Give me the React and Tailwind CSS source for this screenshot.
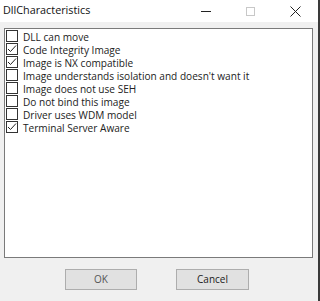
import React from "react";

const items = [
  ["DLL can move", false],
  ["Code Integrity Image", true],
  ["Image is NX compatible", true],
  ["Image understands isolation and doesn't want it", false],
  ["Image does not use SEH", false],
  ["Do not bind this image", false],
  ["Driver uses WDM model", false],
  ["Terminal Server Aware", true],
];

function Box({ checked }) {
  return (
    <div className="w-[12px] h-[12px] border border-[#333333] bg-white flex-none relative">
      {checked && (
        <svg width="10" height="10" viewBox="0 0 10 10" className="absolute left-0 top-0">
          <polyline points="1,5 3.5,7.5 9,1.5" fill="none" stroke="#222" strokeWidth="1" />
        </svg>
      )}
    </div>
  );
}

export default function App() {
  return (
    <div
      className="w-[320px] h-[301px] flex overflow-hidden bg-[#f0f0f0]"
      style={{ fontFamily: '"Open Sans", "Noto Sans", sans-serif' }}
    >
      <div className="w-[318px] h-full flex flex-col bg-[#f0f0f0]">
        <div className="h-[22px] bg-white flex items-center flex-none">
          <div className="pl-[3px] pb-[1px] text-[10.8px] text-[#111] flex-1 leading-none">DllCharacteristics</div>
          <div className="w-[45px] h-full flex items-center justify-center">
            <div className="w-[10px] h-[1px] bg-[#222]" />
          </div>
          <div className="w-[45px] h-full flex items-center justify-center">
            <div className="w-[9px] h-[9px] border border-[#c8c8c8]" />
          </div>
          <div className="w-[45px] h-full flex items-center justify-center">
            <svg width="11" height="11" viewBox="0 0 11 11">
              <path d="M0.5 0.5 L10.5 10.5 M10.5 0.5 L0.5 10.5" stroke="#222" strokeWidth="1" />
            </svg>
          </div>
        </div>
        <div className="pl-[4px] pt-[6px]">
          <div className="w-[309px] h-[230px] border border-[#7a7a7a] bg-white pt-[1px] pl-[1px]">
            {items.map(([label, checked]) => (
              <div key={label} className="h-[13px] flex items-start gap-[5px]">
                <Box checked={checked} />
                <span className="text-[10.1px] leading-[13px] pt-[1px] text-[#222] whitespace-nowrap">{label}</span>
              </div>
            ))}
          </div>
        </div>
        <div className="flex pt-[11px] pl-[65px] gap-[39px]">
          <div className="w-[72px] h-[21px] bg-[#e1e1e1] border border-[#adadad] flex items-center justify-center text-[10px] text-[#555]">
            OK
          </div>
          <div className="w-[73px] h-[21px] bg-[#e1e1e1] border border-[#adadad] flex items-center justify-center text-[10px] text-[#1a1a1a]">
            Cancel
          </div>
        </div>
      </div>
      <div className="w-[2px] h-full bg-[#3a3a3a]" />
    </div>
  );
}
